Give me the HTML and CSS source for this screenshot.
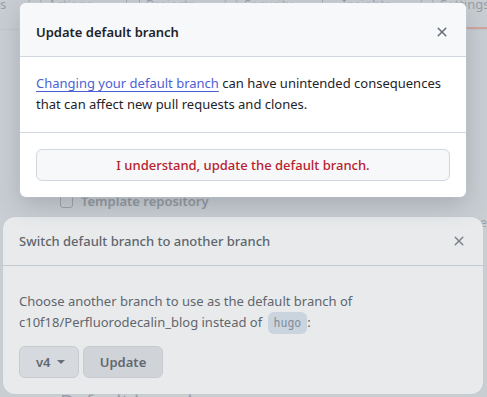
FILE: index.html
```html
<!DOCTYPE html>
<html>
<head>
<meta charset="utf-8">
<link rel="stylesheet" href="styles.css">
</head>
<body>
<div class="page">
  <nav class="tabs">
    <span class="tab first">s</span>
    <span class="tab"><span class="ico"></span>Actions</span>
    <span class="tab"><span class="ico sq"></span>Projects</span>
    <span class="tab"><span class="ico"></span>Security</span>
    <span class="tab"><span class="ico bar"></span>Insights</span>
    <span class="tab active"><span class="ico"></span>Settings</span>
  </nav>
  <div class="settings">
    <label class="check"><span class="box"></span>Template repository</label>
    <p class="desc">Template repositories let users generate new repositories with the same directory</p>
    <h2 class="heading">Default branch</h2>
  </div>
</div>

<div class="dialog lower">
  <header class="d-head">
    <h3 class="d-title">Switch default branch to another branch</h3>
    <svg class="x" width="16" height="16" viewBox="0 0 16 16"><path d="M3.72 3.72a.75.75 0 0 1 1.06 0L8 6.94l3.22-3.22a.75.75 0 1 1 1.06 1.06L9.06 8l3.22 3.22a.75.75 0 1 1-1.06 1.06L8 9.06l-3.22 3.22a.75.75 0 0 1-1.06-1.06L6.94 8 3.72 4.78a.75.75 0 0 1 0-1.06Z"/></svg>
  </header>
  <div class="d-body lower-body">
    <p class="txt">Choose another branch to use as the default branch of c10f18/Perfluorodecalin_blog instead of <code class="branch">hugo</code>:</p>
    <div class="actions">
      <button class="btn sel">v4 <span class="caret"></span></button>
      <button class="btn upd">Update</button>
    </div>
  </div>
</div>

<div class="backdrop"></div>

<div class="dialog upper">
  <header class="d-head up-head">
    <h3 class="d-title dark">Update default branch</h3>
    <svg class="x dark" width="16" height="16" viewBox="0 0 16 16"><path d="M3.72 3.72a.75.75 0 0 1 1.06 0L8 6.94l3.22-3.22a.75.75 0 1 1 1.06 1.06L9.06 8l3.22 3.22a.75.75 0 1 1-1.06 1.06L8 9.06l-3.22 3.22a.75.75 0 0 1-1.06-1.06L6.94 8 3.72 4.78a.75.75 0 0 1 0-1.06Z"/></svg>
  </header>
  <div class="d-body up-body">
    <p class="txt dark"><a class="link" href="#">Changing your default branch</a> can have unintended consequences that can affect new pull requests and clones.</p>
  </div>
  <div class="d-foot">
    <button class="danger">I understand, update the default branch.</button>
  </div>
</div>
</body>
</html>
```

FILE: styles.css
```css
* { box-sizing: border-box; }
html, body { margin: 0; padding: 0; }
body {
  width: 487px;
  height: 397px;
  overflow: hidden;
  background: #d9dce0;
  font-family: "Noto Sans", "Open Sans", sans-serif;
  font-size: 13px;
  color: #1f2328;
  position: relative;
}
.page { color: #9da2a9; }
.tabs {
  display: flex;
  height: 30px;
  align-items: flex-end;
  border-bottom: 1px solid #cfd2d7;
  font-size: 13px;
  white-space: nowrap;
}
.tab {
  flex: none;
  width: 98px;
  height: 34px;
  display: flex;
  align-items: flex-start;
  gap: 6px;
  border-bottom: 2px solid transparent;
}
.tab.first { width: 28px; }
.tab.active { border-bottom-color: #e7a99e; }
.ico { width: 14px; height: 14px; margin-top: 2px; border: 1.5px solid #a8adb4; border-radius: 50%; flex: none; }
.ico.sq { border-radius: 2px; }
.ico.bar { border-radius: 0; border-width: 0 0 0 1.5px; }
.settings { padding-left: 60px; padding-top: 162px; }
.check { display: flex; align-items: center; gap: 8px; font-weight: 600; color: #9499a0; height: 18px; }
.box { width: 13px; height: 13px; border: 1px solid #a0a5ac; border-radius: 3px; }
.desc { margin: 4px 0 0 20px; font-size: 12px; white-space: nowrap; }
.heading { margin: 157px 0 0 0; font-size: 20px; font-weight: 400; }

.backdrop {
  position: absolute;
  inset: 0;
  background: rgba(140, 149, 159, 0.2);
}

.dialog {
  position: absolute;
  display: flex;
  flex-direction: column;
  overflow: hidden;
}
.lower {
  left: 3px;
  top: 217px;
  width: 480px;
  height: 177px;
  border-radius: 12px;
  background: #ffffff;
  box-shadow: 0 0 0 1px rgba(208, 215, 222, 0.5);
}
.upper {
  left: 20px;
  top: 3px;
  width: 446px;
  height: 194px;
  border-radius: 6px;
  background: #ffffff;
  box-shadow: 0 8px 24px rgba(66, 74, 83, 0.25), 0 0 0 1px rgba(208, 215, 222, 0.6);
}
.d-head {
  display: flex;
  align-items: center;
  justify-content: space-between;
  height: 49px;
  padding: 0 16px;
  border-bottom: 1px solid #d0d7de;
  flex: none;
}
.up-head { height: 54px; background: #f6f8fa; padding-top: 4px; }
.d-title { margin: 0; font-size: 13px; font-weight: 500; color: #555a61; }
.d-title.dark { font-weight: 600; color: #1f2328; }
.x { fill: #7a7f86; }
.x.dark { fill: #656d76; }
.d-body { padding: 16px; }
.lower-body { padding: 25px 16px 16px; }
.up-body { border-bottom: 1px solid #d0d7de; height: 76px; }
.txt { margin: 0; line-height: 21px; color: #555a61; }
.txt.dark { color: #1f2328; }
.link { color: #4c5fd5; text-decoration: underline; text-underline-offset: 3px; }
.branch {
  font-family: "DejaVu Sans Mono", monospace;
  font-size: 11.5px;
  color: #7d8a99;
  background: #d9e4ee;
  padding: 4px 6px;
  margin-left: 2px;
  border-radius: 6px;
}
.actions { display: flex; gap: 4px; margin-top: 12px; }
.btn {
  height: 32px;
  font-family: inherit;
  font-size: 13px;
  font-weight: 600;
  color: #585d64;
  border: 1px solid #d6d9dd;
  border-radius: 6px;
  padding: 0 16px;
  display: flex;
  align-items: center;
  gap: 6px;
}
.sel { background: #e9eaed; width: 60px; }
.upd { background: #e1e3e7; width: 80px; justify-content: center; }
.caret {
  width: 0; height: 0;
  border-left: 4px solid transparent;
  border-right: 4px solid transparent;
  border-top: 4px solid #60656c;
}
.d-foot { padding: 16px; flex: 1; }
.danger {
  width: 100%;
  height: 32px;
  background: #f6f8fa;
  border: 1px solid #d0d7de;
  border-radius: 6px;
  font-family: inherit;
  font-size: 13px;
  font-weight: 500;
  color: #b8222d;
}
```
